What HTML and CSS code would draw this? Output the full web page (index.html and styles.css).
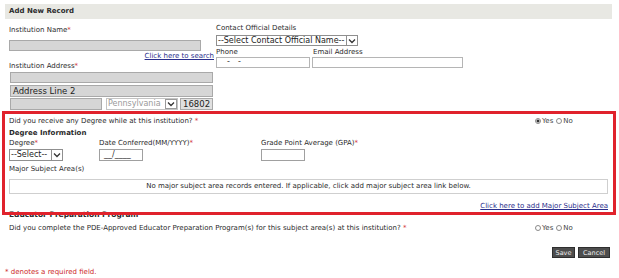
FILE: index.html
```html
<!DOCTYPE html>
<html lang="en">
<head>
  <meta charset="UTF-8">
  <title>Add New Record</title>
  <link rel="stylesheet" href="styles.css">
</head>
<body>

  <div class="title-bar">Add New Record</div>

  <div class="top">
    <div class="inst">
      <div class="label label-name">Institution Name<span class="req">*</span></div>
      <div class="field field-name"></div>
      <div class="search-link"><a href="#">Click here to search</a></div>
      <div class="label label-addr">Institution Address<span class="req">*</span></div>
      <div class="field field-addr"></div>
      <div class="field field-addr2">Address Line 2</div>
      <div class="addr-row">
        <div class="field field-city"></div>
        <div class="select select-state">
          <span class="select-text">Pennsylvania</span>
          <span class="arrow"><svg width="8" height="6" viewBox="0 0 8 6"><polyline points="1,1.5 4,4.5 7,1.5" fill="none" stroke="#333" stroke-width="1.3"/></svg></span>
        </div>
        <div class="field field-zip">16802</div>
      </div>
    </div>

    <div class="contact">
      <div class="label label-contact">Contact Official Details</div>
      <div class="select select-contact">
        <span class="select-text">--Select Contact Official Name--</span>
        <span class="arrow"><svg width="8" height="6" viewBox="0 0 8 6"><polyline points="1,1.5 4,4.5 7,1.5" fill="none" stroke="#333" stroke-width="1.3"/></svg></span>
      </div>
      <div class="contact-labels">
        <span class="phone-label">Phone</span>
        <span>Email Address</span>
      </div>
      <div class="contact-inputs">
        <div class="field field-phone">-&nbsp;&nbsp;-</div>
        <div class="field field-email"></div>
      </div>
    </div>
  </div>

  <div class="degree">
    <div class="question">
      <span>Did you receive any Degree while at this institution? <span class="req">*</span></span>
      <span class="options">
        <label><input type="radio" name="deg" checked>Yes</label>
        <label><input type="radio" name="deg">No</label>
      </span>
    </div>
    <div class="heading">Degree Information</div>
    <div class="degree-grid">
      <span>Degree<span class="req">*</span></span>
      <span>Date Conferred(MM/YYYY)<span class="req">*</span></span>
      <span>Grade Point Average (GPA)<span class="req">*</span></span>
      <div class="select select-degree">
        <span class="select-text">--Select--</span>
        <span class="arrow"><svg width="8" height="6" viewBox="0 0 8 6"><polyline points="1,1.5 4,4.5 7,1.5" fill="none" stroke="#333" stroke-width="1.3"/></svg></span>
      </div>
      <div class="field field-date">__/____</div>
      <div class="field field-gpa"></div>
    </div>
    <div class="label label-major">Major Subject Area(s)</div>
    <div class="empty-msg">No major subject area records entered. If applicable, click add major subject area link below.</div>
    <div class="add-link"><a href="#">Click here to add Major Subject Area</a></div>
    <div class="highlight"></div>
  </div>

  <div class="epp">
    <div class="heading epp-heading">Educator Preparation Program</div>
    <div class="question epp-question">
      <span>Did you complete the PDE-Approved Educator Preparation Program(s) for this subject area(s) at this institution? <span class="req">*</span></span>
      <span class="options">
        <label><input type="radio" name="epp">Yes</label>
        <label><input type="radio" name="epp">No</label>
      </span>
    </div>
  </div>

  <div class="actions">
    <button class="btn btn-save">Save</button>
    <button class="btn btn-cancel">Cancel</button>
  </div>

  <div class="footnote">* denotes a required field.</div>

</body>
</html>
```

FILE: styles.css
```css
body {
  font-family: 'DejaVu Sans', Verdana, sans-serif;
  font-size: 7px;
  color: #2b2b2b;
  margin: 0;
  padding: 0;
  background: #fff;
}

a {
  color: #2b2f8c;
  text-decoration: underline;
}

.req {
  color: #d23a3a;
}

.label {
  line-height: 8px;
}

.title-bar {
  margin: 4px 7px 0 5px;
  height: 15px;
  line-height: 15px;
  padding-left: 4px;
  background: #e8e8e3;
  font-weight: bold;
}

/* inputs and selects */

.field {
  box-sizing: border-box;
  border: 1px solid #a9a9a9;
  background: #d6d6d6;
  font-size: 8px;
  color: #333;
  padding-left: 2px;
  white-space: nowrap;
}

.select {
  box-sizing: border-box;
  display: flex;
  border: 1px solid #8f8f8f;
  background: #fff;
  font-size: 8px;
  color: #222;
}

.select-text {
  flex: 1;
  padding-left: 1px;
  white-space: nowrap;
  overflow: hidden;
}

.arrow {
  width: 10px;
  border-left: 1px solid #8f8f8f;
  display: flex;
  align-items: center;
  justify-content: center;
}

/* top section */

.top {
  display: flex;
  gap: 2px;
  padding-left: 9px;
}

.inst {
  width: 205px;
}

.label-name {
  margin-top: 7px;
}

.field-name {
  margin-top: 6px;
  width: 192px;
  height: 11px;
}

.search-link {
  margin-top: 1px;
  line-height: 8px;
  text-align: right;
}

.label-addr {
  margin-top: 2px;
}

.field-addr {
  margin: 2px 0 0 1px;
  width: 203px;
  height: 11px;
}

.field-addr2 {
  margin: 2px 0 0 1px;
  width: 203px;
  height: 12px;
  line-height: 10px;
  font-size: 8.5px;
  color: #222;
}

.addr-row {
  display: flex;
  gap: 2px;
  margin: 1px 0 0 1px;
  height: 12px;
}

.field-city {
  width: 92px;
  margin-right: 2px;
}

.select-state {
  width: 72px;
  border-color: #c4c4c4;
  color: #9a9a9a;
  line-height: 10px;
}

.select-state .arrow {
  border: 1px solid #9a9a9a;
  margin: 0 0 0 2px;
}

.field-zip {
  width: 33px;
  background: #e0e0e0;
  font-size: 8.5px;
  line-height: 10px;
  color: #222;
}

.contact {
  width: 250px;
}

.label-contact {
  margin-top: 5px;
}

.select-contact {
  margin-top: 3px;
  width: 142px;
  height: 11px;
  line-height: 9px;
}

.contact-labels {
  display: flex;
  margin-top: 2px;
  line-height: 8px;
}

.phone-label {
  width: 97px;
}

.contact-inputs {
  display: flex;
  gap: 2px;
  margin-top: 1px;
}

.contact-inputs .field {
  height: 11px;
  background: #fff;
  border-color: #b5b5b5;
}

.field-phone {
  width: 94px;
  padding-left: 10px;
  line-height: 8px;
  letter-spacing: 1px;
}

.field-email {
  width: 151px;
}

/* degree section */

.degree {
  position: relative;
  padding: 7px 10px 0 9px;
}

.question {
  display: flex;
  align-items: center;
  line-height: 8px;
}

.options {
  margin-left: auto;
  width: 74px;
  display: flex;
  gap: 3px;
  color: #444;
  font-size: 7px;
}

.options label {
  display: flex;
  align-items: center;
}

.options input {
  appearance: none;
  width: 6px;
  height: 6px;
  margin: 0 1px 0 0;
  border: 1px solid #8a8a8a;
  border-radius: 50%;
  background: #fff;
}

.options input:checked {
  background: radial-gradient(circle, #333 1.2px, #fff 1.8px);
}

.heading {
  margin-top: 4px;
  line-height: 8px;
  font-weight: bold;
}

.degree-grid {
  display: grid;
  grid-template-columns: 90px 162px 1fr;
  row-gap: 2px;
  margin-top: 2px;
  line-height: 8px;
}

.select-degree {
  width: 54px;
  height: 12px;
  line-height: 10px;
}

.field-date,
.field-gpa {
  width: 44px;
  height: 12px;
  background: #fff;
  border-color: #a0a0a0;
  line-height: 10px;
  padding-left: 4px;
}

.label-major {
  margin-top: 4px;
}

.empty-msg {
  margin-top: 6px;
  height: 15px;
  box-sizing: border-box;
  border: 1px solid #cfcfcf;
  line-height: 13px;
  text-align: center;
  width: 599px;
}

.add-link {
  margin-top: 8px;
  line-height: 8px;
  text-align: right;
  padding-right: 1px;
}

.highlight {
  position: absolute;
  top: 1px;
  left: 2px;
  right: 3px;
  bottom: -5px;
  border: 3px solid #e0222c;
  pointer-events: none;
  z-index: 2;
}

/* educator preparation */

.epp {
  padding: 0 10px 0 9px;
}

.epp-heading {
  margin-top: 0;
  line-height: 9px;
  font-size: 7.5px;
}

.epp-question {
  margin-top: 5px;
}

.actions {
  display: flex;
  justify-content: flex-end;
  gap: 3px;
  margin-top: 15px;
  padding-right: 9px;
}

.btn {
  height: 11px;
  padding: 0;
  border: 1px solid #2e2e2e;
  background: #4d4d4d;
  color: #eee;
  font-family: 'DejaVu Sans', Verdana, sans-serif;
  font-size: 6.5px;
}

.btn-save {
  width: 23px;
}

.btn-cancel {
  width: 32px;
}

.footnote {
  margin-top: 10px;
  padding-left: 5px;
  line-height: 8px;
  color: #cc2a2a;
}
```
